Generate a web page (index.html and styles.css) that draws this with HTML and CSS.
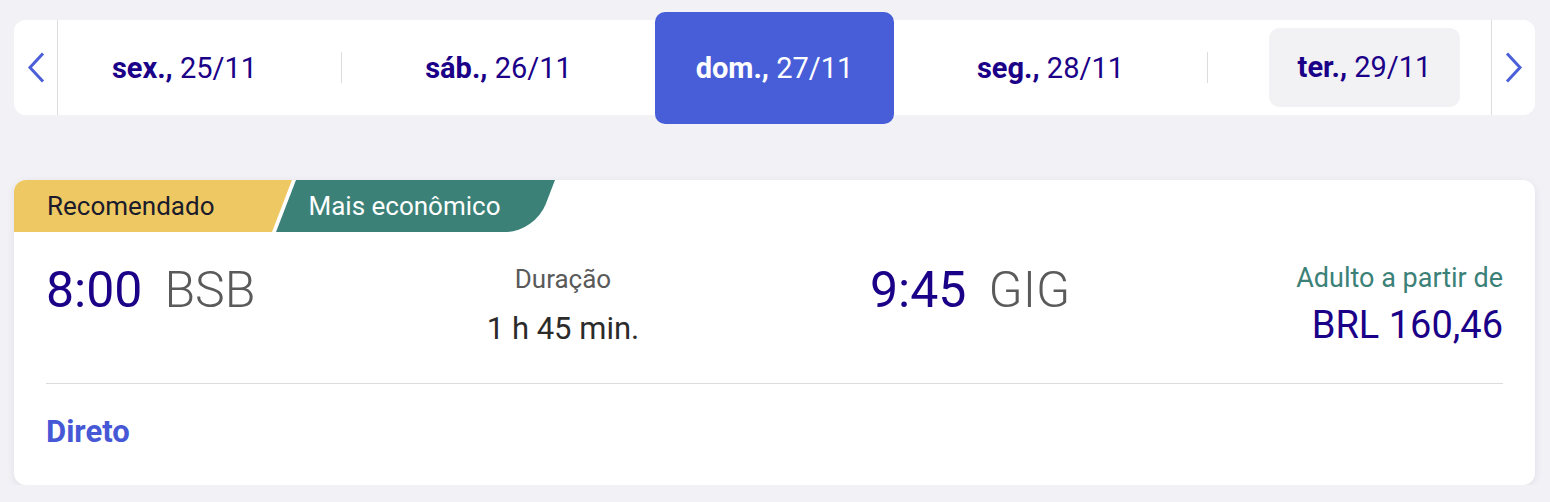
FILE: index.html
```html
<!DOCTYPE html>
<html lang="pt-BR">

<head>
    <meta charset="UTF-8">
    <meta name="viewport" content="width=device-width, initial-scale=1.0">
    <title>Voos</title>
    <link rel="stylesheet" href="styles.css">
</head>

<body>
    <div class="date-bar">
        <button class="date-arrow prev" aria-label="Anterior">
            <svg width="18" height="31" viewBox="0 0 18 31"><path d="M16 1.5 L3 15.5 L16 29.5" /></svg>
        </button>
        <div class="date-track">
            <div class="date-row">
                <div class="date-item"><span class="date-label"><b>sex.,</b> 25/11</span></div>
                <span class="date-sep"></span>
                <div class="date-item"><span class="date-label"><b>sáb.,</b> 26/11</span></div>
                <div class="date-item active"><span class="date-label"><b>dom.,</b> 27/11</span></div>
                <div class="date-item"><span class="date-label"><b>seg.,</b> 28/11</span></div>
                <span class="date-sep"></span>
                <div class="date-item hover"><span class="date-label"><b>ter.,</b> 29/11</span></div>
            </div>
        </div>
        <button class="date-arrow next" aria-label="Próximo">
            <svg width="18" height="31" viewBox="0 0 18 31"><path d="M2 1.5 L15 15.5 L2 29.5" /></svg>
        </button>
    </div>

    <div class="flight-card">
        <div class="badges">
            <div class="badge recommended">Recomendado</div>
            <div class="badge cheapest">Mais econômico</div>
        </div>
        <div class="flight-body">
            <div class="flight-row">
                <div class="flight-point">
                    <span class="flight-time">8:00</span>
                    <span class="flight-airport">BSB</span>
                </div>
                <div class="flight-duration">
                    <div class="duration-label">Duração</div>
                    <div class="duration-value">1 h 45 min.</div>
                </div>
                <div class="flight-point arrival">
                    <span class="flight-time">9:45</span>
                    <span class="flight-airport">GIG</span>
                </div>
                <div class="flight-price">
                    <div class="price-label">Adulto a partir de</div>
                    <div class="price-value">BRL 160,46</div>
                </div>
            </div>
            <div class="flight-footer">
                <a class="flight-stops" href="#">Direto</a>
            </div>
        </div>
    </div>
</body>

</html>
```

FILE: styles.css
```css
body {
    margin: 0;
    padding: 20px 15px 0 14px;
    background-color: #f1f1f6;
    font-family: Roboto, "Noto Sans", sans-serif;
    color: #1b0088;
}

/* date selector */
.date-bar {
    display: flex;
    height: 95px;
    background-color: #fff;
    border-radius: 12px;
}

.date-arrow {
    display: flex;
    align-items: center;
    justify-content: center;
    flex: none;
    width: 44px;
    padding: 0;
    border: none;
    background: #fff;
    cursor: pointer;
}

.date-arrow.prev {
    border-right: 1px solid #dcdce0;
    border-radius: 12px 0 0 12px;
}

.date-arrow.next {
    border-left: 1px solid #dcdce0;
    border-radius: 0 12px 12px 0;
}

.date-arrow path {
    fill: none;
    stroke: #4a5fd8;
    stroke-width: 3;
}

.date-track {
    flex: 1;
    min-width: 0;
    overflow-x: clip;
}

.date-row {
    display: flex;
    align-items: center;
    height: 100%;
    margin-left: -30px;
}

.date-item {
    display: flex;
    align-items: center;
    justify-content: center;
    flex: none;
    width: 313px;
    height: 100%;
    font-size: 29px;
    white-space: nowrap;
}

.date-label b {
    font-weight: 700;
}

.date-sep {
    flex: none;
    width: 1px;
    height: 31px;
    background-color: #dcdce0;
}

.date-item.active {
    width: 239px;
    height: 112px;
    border-radius: 10px;
    background-color: #475ed8;
    color: #fff;
}

.date-item.hover .date-label {
    display: inline-block;
    width: 191px;
    line-height: 79px;
    text-align: center;
    border-radius: 10px;
    background-color: #f2f2f4;
}

/* flight card */
.flight-card {
    margin-top: 65px;
    background-color: #fff;
    border-radius: 12px;
    box-shadow: 0 2px 8px rgba(30, 30, 60, 0.08);
    overflow: hidden;
}

.badges {
    display: flex;
    height: 52px;
    font-size: 26px;
}

.badge {
    position: relative;
    z-index: 0;
    display: flex;
    align-items: center;
}

.badge::before {
    content: "";
    position: absolute;
    inset: 0;
    z-index: -1;
    transform: skewX(-21deg);
}

.badge.recommended {
    margin-left: -20px;
    padding: 0 67px 0 53px;
    color: #1b1b2b;
}

.badge.recommended::before {
    background-color: #eec963;
}

.badge.cheapest {
    margin-left: 4px;
    padding: 0 44px 0 23px;
    color: #fff;
}

.badge.cheapest::before {
    background-color: #3b8178;
    border-bottom-right-radius: 28px;
}

.flight-body {
    padding: 30px 32px 35px;
}

.flight-row {
    display: grid;
    grid-template-columns: 400px 234px 1fr auto;
    align-items: start;
    padding-bottom: 34px;
    border-bottom: 1px solid #dcdcdc;
}

.flight-point {
    display: flex;
    align-items: baseline;
    gap: 22px;
    line-height: 1.15;
}

.flight-point.arrival {
    margin-left: 190px;
}

.flight-time {
    font-size: 50px;
    color: #1b0088;
}

.flight-airport {
    font-size: 50px;
    font-weight: 300;
    color: #5a5a5a;
}

.flight-duration {
    text-align: center;
    line-height: 1.2;
    padding-top: 2px;
}

.duration-label {
    font-size: 26px;
    color: #5a5a5a;
}

.duration-value {
    margin-top: 15px;
    font-size: 31px;
    color: #2b2b2b;
}

.flight-price {
    text-align: right;
    line-height: 1.2;
}

.price-label {
    font-size: 27px;
    color: #3b8178;
}

.price-value {
    margin-top: 9px;
    font-size: 38px;
    color: #1b0088;
}

.flight-footer {
    padding-top: 29px;
    line-height: 1.2;
}

.flight-stops {
    font-size: 31px;
    font-weight: 700;
    color: #4658d6;
    text-decoration: none;
}
```
